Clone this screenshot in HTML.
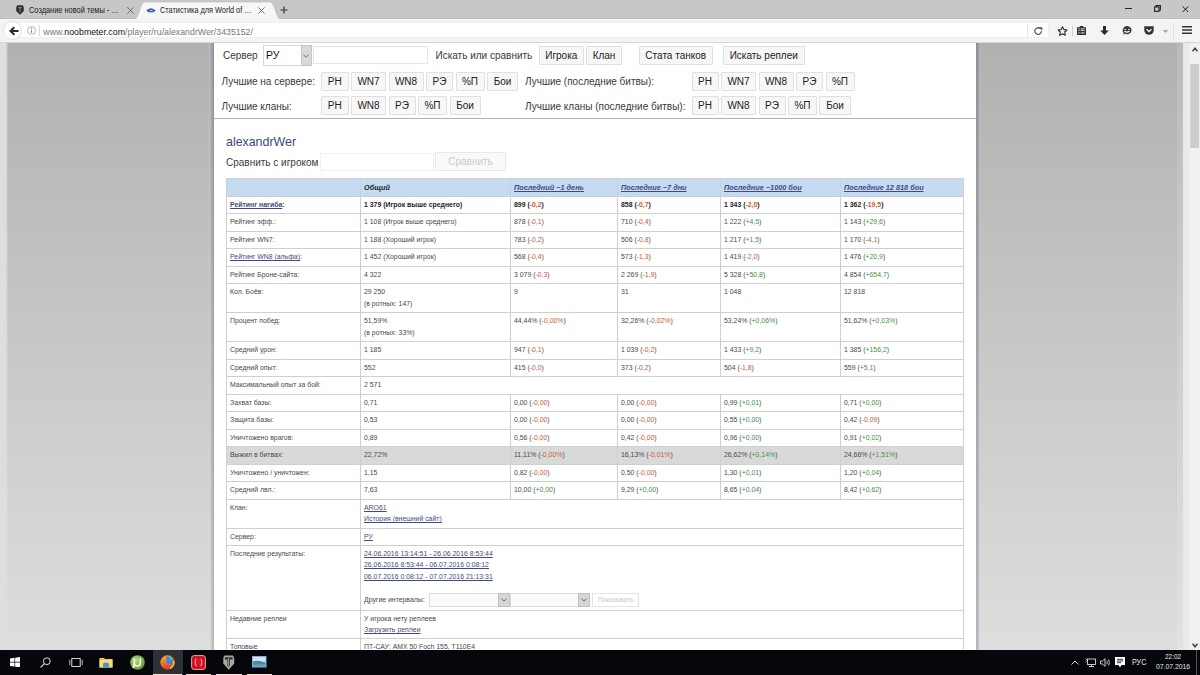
<!DOCTYPE html>
<html><head><meta charset="utf-8">
<style>
*{box-sizing:border-box}
html,body{margin:0;padding:0}
body{width:1200px;height:675px;overflow:hidden;position:relative;font-family:"Liberation Sans",sans-serif;background:#fff}
.abs{position:absolute}
.t{position:absolute;white-space:nowrap;font-size:6.9px;line-height:11.5px}
u,.t u{text-decoration-thickness:0.7px;text-underline-offset:0.8px}
.hl{position:absolute;left:226.0px;width:738.0px;height:1px;background:#cfcfcf}
.vl{position:absolute;width:1px;background:#cfcfcf}
.btn{position:absolute;height:19px;border:1px solid #e0e0e0;background:#f7f7f7;font-size:10px;line-height:17.6px;text-align:center;color:#222;border-radius:1px}
.lbl{position:absolute;font-size:10px;line-height:12px;color:#3a3a3a;white-space:nowrap}
</style></head><body>
<!-- tab strip -->
<div class="abs" style="left:0;top:0;width:1200px;height:19px;background:#c7c7c7"></div>
<div class="abs" style="left:0;top:18px;width:1200px;height:1px;background:#bdbdbd"></div>
<!-- active tab -->
<svg class="abs" style="left:130px;top:0" width="155" height="20" viewBox="0 0 155 20">
 <path d="M4 19.5 C9 19.5 10 2 15 2 L140 2 C145 2 146 19.5 151 19.5 Z" fill="#f6f6f7" stroke="#b8b8b8" stroke-width="0.6"/>
</svg>
<div class="abs" style="left:0;top:18.5px;width:1200px;height:24px;background:#f4f4f4"></div>
<!-- tab 1 -->
<svg class="abs" style="left:16px;top:4.8px" width="8" height="10" viewBox="0 0 8 10"><path d="M1.2 0.3 H6.8 L7.8 2.5 V6 L4 9.8 L0.2 6 V2.5 Z" fill="#2e2e2e"/><path d="M2.3 2.6 H5.7 M4 2.6 V7" stroke="#8a8a8a" stroke-width="1"/></svg>
<div class="abs" style="left:29px;top:6px;font-size:8.4px;line-height:9px;color:#1a1a1a;white-space:nowrap;transform:scaleX(0.885);transform-origin:0 0">Создание новой темы - …</div>
<svg class="abs" style="left:126.5px;top:6.5px" width="7" height="7" viewBox="0 0 7 7"><path d="M0.4 0.3 L6.6 6.7 M6.6 0.3 L0.4 6.7" stroke="#555" stroke-width="0.8"/></svg>
<!-- tab 2 -->
<svg class="abs" style="left:146.2px;top:7.6px" width="10" height="5" viewBox="0 0 10 5"><path d="M0.2 2.7 Q2 0.2 5 0.2 Q8 0.2 9.8 2.7 Q7.5 4.6 5 4.6 Q2.5 4.6 0.2 2.7 Z" fill="#3f5eae"/><ellipse cx="5.3" cy="2.6" rx="1.8" ry="0.7" fill="#a9c4f0"/></svg>
<div class="abs" style="left:160px;top:6px;font-size:8.4px;line-height:9px;color:#1a1a1a;white-space:nowrap;transform:scaleX(0.875);transform-origin:0 0">Статистика для World of …</div>
<svg class="abs" style="left:258px;top:7.2px" width="7" height="7" viewBox="0 0 7 7"><path d="M0.4 0.4 L6.6 6.6 M6.6 0.4 L0.4 6.6" stroke="#555" stroke-width="0.8"/></svg>
<svg class="abs" style="left:279.5px;top:5.8px" width="8" height="8" viewBox="0 0 8 8"><path d="M4 0.5 L4 7.5 M0.5 4 L7.5 4" stroke="#333" stroke-width="1.2"/></svg>
<!-- window controls -->
<div class="abs" style="left:1125px;top:8px;width:6.5px;height:1.1px;background:#222"></div>
<svg class="abs" style="left:1153.5px;top:5.2px" width="7" height="7" viewBox="0 0 7 7"><rect x="0.6" y="2" width="4.4" height="4.4" fill="none" stroke="#222" stroke-width="1.1"/><path d="M2 2 V0.6 H6.4 V5 H5" fill="none" stroke="#222" stroke-width="1.1"/></svg>
<svg class="abs" style="left:1182.3px;top:5.5px" width="7" height="6.5" viewBox="0 0 7 6.5"><path d="M0.4 0.3 L6.6 6.2 M6.6 0.3 L0.4 6.2" stroke="#222" stroke-width="1"/></svg>

<!-- nav bar -->
<div class="abs" style="left:10px;top:22.3px;width:1039px;height:15.8px;background:#fff;border:1px solid #f0f0f0;border-left:none;border-radius:0 2px 2px 0"></div>
<div class="abs" style="left:3px;top:21px;width:19px;height:19px;border-radius:50%;background:#fff;border:1px solid #e0e0e0"></div>
<svg class="abs" style="left:8.5px;top:25.5px" width="10" height="10" viewBox="0 0 10 10"><path d="M9.5 5 L2 5 M5.3 1.2 L1.5 5 L5.3 8.8" fill="none" stroke="#2a2a2a" stroke-width="2"/></svg>
<svg class="abs" style="left:26.5px;top:26px" width="9" height="9" viewBox="0 0 9 9"><circle cx="4.5" cy="4.5" r="4" fill="none" stroke="#a0a0a0" stroke-width="0.8"/><path d="M4.5 3.8 L4.5 7" stroke="#8a8a8a" stroke-width="1"/><circle cx="4.5" cy="2.4" r="0.6" fill="#8a8a8a"/></svg>
<div class="abs" style="left:39px;top:25px;width:1px;height:11px;background:#d8d8d8"></div>
<div class="abs" style="left:43.3px;top:26.8px;font-size:8.8px;line-height:11px;color:#777;white-space:nowrap">www.<span style="color:#111">noobmeter.com</span>/player/ru/alexandrWer/3435152/</div>
<div class="abs" style="left:1027px;top:23.5px;width:1px;height:13.5px;background:#e8e8e8"></div>
<svg class="abs" style="left:1033.5px;top:27px" width="9" height="8" viewBox="0 0 9 8"><path d="M7.4 4.2 A3.3 3.3 0 1 1 6.3 1.6" fill="none" stroke="#5a5a5a" stroke-width="1.3"/><path d="M4.6 0.2 L8.4 0.2 L8.2 3.8 Z" fill="#5a5a5a"/></svg>
<svg class="abs" style="left:1057px;top:26px" width="11" height="10" viewBox="0 0 11 10"><path d="M5.5 0.7 L6.9 3.6 L10 4 L7.7 6 L8.4 9.3 L5.5 7.7 L2.6 9.3 L3.3 6 L1 4 L4.1 3.6 Z" fill="none" stroke="#2b2b2b" stroke-width="1.1" stroke-linejoin="round"/></svg>
<div class="abs" style="left:1072px;top:26px;width:1px;height:10px;background:#d0d0d0"></div>
<svg class="abs" style="left:1077.3px;top:26px" width="9" height="9" viewBox="0 0 9 9"><path d="M0.7 1.8 H8.3 V8.3 H0.7 Z" fill="none" stroke="#2b2b2b" stroke-width="1.3"/><path d="M3 0 H6 L6.5 1.8 H2.5 Z" fill="#2b2b2b"/><path d="M1 3.9 H8 M1 5.5 H8 M1 7 H8 M3.2 2 V8" stroke="#2b2b2b" stroke-width="0.9"/></svg>
<svg class="abs" style="left:1100px;top:25.8px" width="9" height="9" viewBox="0 0 9 9"><path d="M3 0 H6 V4.5 H8.8 L4.5 9 L0.2 4.5 H3 Z" fill="#2b2b2b"/></svg>
<svg class="abs" style="left:1121.7px;top:26px" width="10" height="9" viewBox="0 0 10 9"><path d="M5 0.1 A4.4 4.1 0 1 1 2.7 7.6 L1.2 8.9 L1.6 6.7 A4.4 4.1 0 0 1 5 0.1 Z" fill="#3a3a3a"/><path d="M2.4 3.4 H4 M6 3.4 H7.6" stroke="#fff" stroke-width="0.9"/><path d="M2.5 5 Q5 7.3 7.5 5" fill="none" stroke="#fff" stroke-width="1.1"/></svg>
<svg class="abs" style="left:1144.2px;top:26px" width="10" height="9" viewBox="0 0 10 9"><path d="M0.3 0.3 H9.7 V4.3 A4.7 4.5 0 0 1 0.3 4.3 Z" fill="#333"/><path d="M2.6 3.3 L5 5.6 L7.4 3.3" fill="none" stroke="#fff" stroke-width="1.3"/></svg>
<svg class="abs" style="left:1163.2px;top:28.5px" width="5" height="4" viewBox="0 0 5 4"><path d="M0.6 0.8 L2.5 3 L4.4 0.8" fill="none" stroke="#999" stroke-width="1.3"/></svg>
<div class="abs" style="left:1173px;top:22px;width:1px;height:19px;background:#e2e2e2"></div>
<svg class="abs" style="left:1182px;top:26.3px" width="10" height="8" viewBox="0 0 10 8"><path d="M0 0.8 H10 M0 4 H10 M0 7.2 H10" stroke="#333" stroke-width="1.5"/></svg>
<div class="abs" style="left:0;top:41.5px;width:1200px;height:1px;background:#d6d6d6"></div>

<!-- page background -->
<div class="abs" style="left:0;top:42.5px;width:1183px;height:607.5px;background:linear-gradient(#b1b1b1,#dedede)"></div>
<div class="abs" style="left:0;top:42.5px;width:7.5px;height:607.5px;background:linear-gradient(to right,#dedede 75%,rgba(222,222,222,0))"></div>
<div class="abs" style="left:1177px;top:42.5px;width:6px;height:607.5px;background:linear-gradient(#bababa,#e2e2e2)"></div>
<div class="abs" style="left:208px;top:42.5px;width:6px;height:607.5px;background:linear-gradient(to right,rgba(235,235,245,0.05),rgba(240,240,250,0.08) 30%,rgba(30,30,50,0.12) 65%,rgba(30,30,50,0.24))"></div>
<div class="abs" style="left:976px;top:42.5px;width:5px;height:607.5px;background:linear-gradient(to right,rgba(30,20,60,0.22),rgba(30,20,60,0.18) 45%,rgba(230,230,240,0.06) 70%,rgba(0,0,0,0))"></div>
<div class="abs" style="left:214px;top:42.5px;width:762px;height:607.5px;background:#fff"></div>

<!-- scrollbar -->
<div class="abs" style="left:1183px;top:42.5px;width:6px;height:607.5px;background:#e9e9e9"></div><div class="abs" style="left:1189px;top:42.5px;width:11px;height:607.5px;background:#f0f0f0"></div>
<svg class="abs" style="left:1192px;top:46.5px" width="6" height="5" viewBox="0 0 6 5"><path d="M0.6 4.2 L3 1.2 L5.4 4.2" fill="none" stroke="#404040" stroke-width="1.5"/></svg>
<div class="abs" style="left:1190px;top:64px;width:9px;height:84px;background:#cdcdcd"></div>
<svg class="abs" style="left:1192px;top:642.5px" width="6" height="5" viewBox="0 0 6 5"><path d="M0.6 0.8 L3 3.8 L5.4 0.8" fill="none" stroke="#404040" stroke-width="1.5"/></svg>

<!-- header menu -->
<div class="lbl" style="left:223px;top:50px">Сервер</div>
<div class="abs" style="left:263px;top:45px;width:49px;height:20.5px;border:1px solid #d6d6d6;background:#fff"></div>
<div class="abs" style="left:266px;top:49px;font-size:10.5px;line-height:12px;color:#111">РУ</div>
<div class="abs" style="left:300.5px;top:45px;width:11.5px;height:20.5px;background:#d9d9d9;border:1px solid #c6c6c6"></div>
<svg class="abs" style="left:303px;top:54px" width="6" height="4" viewBox="0 0 6 4"><path d="M0.5 0.8 L3 3.2 L5.5 0.8" fill="none" stroke="#666" stroke-width="0.9"/></svg>
<div class="abs" style="left:313px;top:45.5px;width:115px;height:18.5px;border:1px solid #e6e6e6;background:#fff"></div>
<div class="lbl" style="left:435.5px;top:50px">Искать или сравнить</div>
<div class="btn" style="left:538.5px;top:45.5px;width:45.5px">Игрока</div>
<div class="btn" style="left:586px;top:45.5px;width:36px">Клан</div>
<div class="btn" style="left:639px;top:45.5px;width:73.5px">Стата танков</div>
<div class="btn" style="left:723px;top:45.5px;width:81.5px">Искать реплеи</div>

<div class="lbl" style="left:221.5px;top:75.5px">Лучшие на сервере:</div>
<div class="btn" style="left:321px;top:72px;width:27.5px">РН</div>
<div class="btn" style="left:351px;top:72px;width:35px">WN7</div>
<div class="btn" style="left:388.5px;top:72px;width:35px">WN8</div>
<div class="btn" style="left:426px;top:72px;width:27px">РЭ</div>
<div class="btn" style="left:455.5px;top:72px;width:29px">%П</div>
<div class="btn" style="left:487px;top:72px;width:31px">Бои</div>
<div class="lbl" style="left:525px;top:75.5px">Лучшие (последние битвы):</div>
<div class="btn" style="left:691.5px;top:72px;width:27px">РН</div>
<div class="btn" style="left:721px;top:72px;width:35px">WN7</div>
<div class="btn" style="left:758.5px;top:72px;width:35px">WN8</div>
<div class="btn" style="left:796px;top:72px;width:27px">РЭ</div>
<div class="btn" style="left:825.5px;top:72px;width:29px">%П</div>

<div class="lbl" style="left:221.5px;top:100.8px">Лучшие кланы:</div>
<div class="btn" style="left:321px;top:96px;width:27.5px">РН</div>
<div class="btn" style="left:351px;top:96px;width:35px">WN8</div>
<div class="btn" style="left:388.5px;top:96px;width:27px">РЭ</div>
<div class="btn" style="left:418px;top:96px;width:29px">%П</div>
<div class="btn" style="left:449.5px;top:96px;width:31px">Бои</div>
<div class="lbl" style="left:525px;top:100.8px">Лучшие кланы (последние битвы):</div>
<div class="btn" style="left:691.5px;top:96px;width:27px">РН</div>
<div class="btn" style="left:721px;top:96px;width:35px">WN8</div>
<div class="btn" style="left:758.5px;top:96px;width:27px">РЭ</div>
<div class="btn" style="left:788px;top:96px;width:29px">%П</div>
<div class="btn" style="left:819px;top:96px;width:32px">Бои</div>
<div class="abs" style="left:214px;top:117.5px;width:762px;height:1px;background:#b2b2b2"></div>

<div class="abs" style="left:226px;top:135.2px;font-size:12.4px;line-height:14px;color:#3b4a7c;white-space:nowrap">alexandrWer</div>
<div class="lbl" style="left:226px;top:157px">Сравнить с игроком</div>
<div class="abs" style="left:320px;top:153px;width:114px;height:18px;border:1px solid #f0f0f0;background:#fff"></div>
<div class="btn" style="left:435px;top:152px;width:71px;color:#cbcbcb;border-color:#e9e9e9;background:#f9f9f9">Сравнить</div>

<div style="position:absolute;left:226.5px;top:178.5px;width:737.0px;height:18.0px;background:#c5dbf1"></div>
<div style="position:absolute;left:226.5px;top:446.6px;width:737.0px;height:17.5px;background:#d9d9d9"></div>
<div class="hl" style="top:178.0px"></div>
<div class="hl" style="top:196.0px"></div>
<div class="hl" style="top:213.4px"></div>
<div class="hl" style="top:230.9px"></div>
<div class="hl" style="top:248.4px"></div>
<div class="hl" style="top:265.9px"></div>
<div class="hl" style="top:283.4px"></div>
<div class="hl" style="top:312.4px"></div>
<div class="hl" style="top:341.1px"></div>
<div class="hl" style="top:358.6px"></div>
<div class="hl" style="top:376.1px"></div>
<div class="hl" style="top:393.6px"></div>
<div class="hl" style="top:411.1px"></div>
<div class="hl" style="top:428.6px"></div>
<div class="hl" style="top:446.1px"></div>
<div class="hl" style="top:463.6px"></div>
<div class="hl" style="top:481.1px"></div>
<div class="hl" style="top:498.6px"></div>
<div class="hl" style="top:527.6px"></div>
<div class="hl" style="top:544.6px"></div>
<div class="hl" style="top:609.6px"></div>
<div class="hl" style="top:638.1px"></div>
<div class="vl" style="left:226.0px;top:178.0px;height:502.5px"></div>
<div class="vl" style="left:963.0px;top:178.0px;height:502.5px"></div>
<div class="vl" style="left:360.0px;top:178.0px;height:502.5px"></div>
<div class="vl" style="left:510.0px;top:178.0px;height:19.0px"></div>
<div class="vl" style="left:510.0px;top:196.0px;height:18.4px"></div>
<div class="vl" style="left:510.0px;top:213.4px;height:18.5px"></div>
<div class="vl" style="left:510.0px;top:230.9px;height:18.5px"></div>
<div class="vl" style="left:510.0px;top:248.4px;height:18.5px"></div>
<div class="vl" style="left:510.0px;top:265.9px;height:18.5px"></div>
<div class="vl" style="left:510.0px;top:283.4px;height:30.0px"></div>
<div class="vl" style="left:510.0px;top:312.4px;height:29.7px"></div>
<div class="vl" style="left:510.0px;top:341.1px;height:18.5px"></div>
<div class="vl" style="left:510.0px;top:358.6px;height:18.5px"></div>
<div class="vl" style="left:510.0px;top:393.6px;height:18.5px"></div>
<div class="vl" style="left:510.0px;top:411.1px;height:18.5px"></div>
<div class="vl" style="left:510.0px;top:428.6px;height:18.5px"></div>
<div class="vl" style="left:510.0px;top:446.1px;height:18.5px"></div>
<div class="vl" style="left:510.0px;top:463.6px;height:18.5px"></div>
<div class="vl" style="left:510.0px;top:481.1px;height:18.5px"></div>
<div class="vl" style="left:617.0px;top:178.0px;height:19.0px"></div>
<div class="vl" style="left:617.0px;top:196.0px;height:18.4px"></div>
<div class="vl" style="left:617.0px;top:213.4px;height:18.5px"></div>
<div class="vl" style="left:617.0px;top:230.9px;height:18.5px"></div>
<div class="vl" style="left:617.0px;top:248.4px;height:18.5px"></div>
<div class="vl" style="left:617.0px;top:265.9px;height:18.5px"></div>
<div class="vl" style="left:617.0px;top:283.4px;height:30.0px"></div>
<div class="vl" style="left:617.0px;top:312.4px;height:29.7px"></div>
<div class="vl" style="left:617.0px;top:341.1px;height:18.5px"></div>
<div class="vl" style="left:617.0px;top:358.6px;height:18.5px"></div>
<div class="vl" style="left:617.0px;top:393.6px;height:18.5px"></div>
<div class="vl" style="left:617.0px;top:411.1px;height:18.5px"></div>
<div class="vl" style="left:617.0px;top:428.6px;height:18.5px"></div>
<div class="vl" style="left:617.0px;top:446.1px;height:18.5px"></div>
<div class="vl" style="left:617.0px;top:463.6px;height:18.5px"></div>
<div class="vl" style="left:617.0px;top:481.1px;height:18.5px"></div>
<div class="vl" style="left:720.0px;top:178.0px;height:19.0px"></div>
<div class="vl" style="left:720.0px;top:196.0px;height:18.4px"></div>
<div class="vl" style="left:720.0px;top:213.4px;height:18.5px"></div>
<div class="vl" style="left:720.0px;top:230.9px;height:18.5px"></div>
<div class="vl" style="left:720.0px;top:248.4px;height:18.5px"></div>
<div class="vl" style="left:720.0px;top:265.9px;height:18.5px"></div>
<div class="vl" style="left:720.0px;top:283.4px;height:30.0px"></div>
<div class="vl" style="left:720.0px;top:312.4px;height:29.7px"></div>
<div class="vl" style="left:720.0px;top:341.1px;height:18.5px"></div>
<div class="vl" style="left:720.0px;top:358.6px;height:18.5px"></div>
<div class="vl" style="left:720.0px;top:393.6px;height:18.5px"></div>
<div class="vl" style="left:720.0px;top:411.1px;height:18.5px"></div>
<div class="vl" style="left:720.0px;top:428.6px;height:18.5px"></div>
<div class="vl" style="left:720.0px;top:446.1px;height:18.5px"></div>
<div class="vl" style="left:720.0px;top:463.6px;height:18.5px"></div>
<div class="vl" style="left:720.0px;top:481.1px;height:18.5px"></div>
<div class="vl" style="left:840.0px;top:178.0px;height:19.0px"></div>
<div class="vl" style="left:840.0px;top:196.0px;height:18.4px"></div>
<div class="vl" style="left:840.0px;top:213.4px;height:18.5px"></div>
<div class="vl" style="left:840.0px;top:230.9px;height:18.5px"></div>
<div class="vl" style="left:840.0px;top:248.4px;height:18.5px"></div>
<div class="vl" style="left:840.0px;top:265.9px;height:18.5px"></div>
<div class="vl" style="left:840.0px;top:283.4px;height:30.0px"></div>
<div class="vl" style="left:840.0px;top:312.4px;height:29.7px"></div>
<div class="vl" style="left:840.0px;top:341.1px;height:18.5px"></div>
<div class="vl" style="left:840.0px;top:358.6px;height:18.5px"></div>
<div class="vl" style="left:840.0px;top:393.6px;height:18.5px"></div>
<div class="vl" style="left:840.0px;top:411.1px;height:18.5px"></div>
<div class="vl" style="left:840.0px;top:428.6px;height:18.5px"></div>
<div class="vl" style="left:840.0px;top:446.1px;height:18.5px"></div>
<div class="vl" style="left:840.0px;top:463.6px;height:18.5px"></div>
<div class="vl" style="left:840.0px;top:481.1px;height:18.5px"></div>
<div class="t" style="left:364.00px;top:181.56px;font-weight:bold;font-style:italic;color:#222;font-size:7.3px">Общий</div>
<div class="t" style="left:514.00px;top:181.56px;font-weight:bold;font-style:italic;color:#3f4a80;text-decoration:underline;font-size:7.3px">Последний ~1 день</div>
<div class="t" style="left:621.00px;top:181.56px;font-weight:bold;font-style:italic;color:#3f4a80;text-decoration:underline;font-size:7.3px">Последние ~7 дни</div>
<div class="t" style="left:724.00px;top:181.56px;font-weight:bold;font-style:italic;color:#3f4a80;text-decoration:underline;font-size:7.3px">Последние ~1000 бои</div>
<div class="t" style="left:844.00px;top:181.56px;font-weight:bold;font-style:italic;color:#3f4a80;text-decoration:underline;font-size:7.3px">Последние 12 818 бои</div>
<div class="t" style="left:230.00px;top:198.96px;font-weight:bold;color:#333"><u style="color:#3f4a80">Рейтинг нагиба</u>:</div>
<div class="t" style="left:364.00px;top:198.96px;font-weight:bold;color:#222">1 379 (Игрок выше среднего)</div>
<div class="t" style="left:514.00px;top:198.96px;font-weight:bold;color:#222">899 (<span style="color:#c65a34">-0,2</span>)</div>
<div class="t" style="left:621.00px;top:198.96px;font-weight:bold;color:#222">858 (<span style="color:#c65a34">-0,7</span>)</div>
<div class="t" style="left:724.00px;top:198.96px;font-weight:bold;color:#222">1 343 (<span style="color:#c65a34">-2,0</span>)</div>
<div class="t" style="left:844.00px;top:198.96px;font-weight:bold;color:#222">1 362 (<span style="color:#c65a34">-19,5</span>)</div>
<div class="t" style="left:230.00px;top:216.36px;color:#484848">Рейтинг эфф.:</div>
<div class="t" style="left:364.00px;top:216.36px;color:#484848">1 108 (Игрок выше среднего)</div>
<div class="t" style="left:514.00px;top:216.36px;color:#484848">878 (<span style="color:#c65a34">-0,1</span>)</div>
<div class="t" style="left:621.00px;top:216.36px;color:#484848">710 (<span style="color:#c65a34">-0,4</span>)</div>
<div class="t" style="left:724.00px;top:216.36px;color:#484848">1 222 (<span style="color:#449244">+4,5</span>)</div>
<div class="t" style="left:844.00px;top:216.36px;color:#484848">1 143 (<span style="color:#449244">+29,6</span>)</div>
<div class="t" style="left:230.00px;top:233.86px;color:#484848">Рейтинг WN7:</div>
<div class="t" style="left:364.00px;top:233.86px;color:#484848">1 188 (Хороший игрок)</div>
<div class="t" style="left:514.00px;top:233.86px;color:#484848">783 (<span style="color:#c65a34">-0,2</span>)</div>
<div class="t" style="left:621.00px;top:233.86px;color:#484848">506 (<span style="color:#c65a34">-0,8</span>)</div>
<div class="t" style="left:724.00px;top:233.86px;color:#484848">1 217 (<span style="color:#449244">+1,5</span>)</div>
<div class="t" style="left:844.00px;top:233.86px;color:#484848">1 170 (<span style="color:#c65a34">-4,1</span>)</div>
<div class="t" style="left:230.00px;top:251.36px;color:#484848"><u style="color:#3f4a80">Рейтинг WN8 (альфа)</u>:</div>
<div class="t" style="left:364.00px;top:251.36px;color:#484848">1 452 (Хороший игрок)</div>
<div class="t" style="left:514.00px;top:251.36px;color:#484848">568 (<span style="color:#c65a34">-0,4</span>)</div>
<div class="t" style="left:621.00px;top:251.36px;color:#484848">573 (<span style="color:#c65a34">-1,3</span>)</div>
<div class="t" style="left:724.00px;top:251.36px;color:#484848">1 419 (<span style="color:#c65a34">-2,0</span>)</div>
<div class="t" style="left:844.00px;top:251.36px;color:#484848">1 476 (<span style="color:#449244">+20,9</span>)</div>
<div class="t" style="left:230.00px;top:268.86px;color:#484848">Рейтинг Броне-сайта:</div>
<div class="t" style="left:364.00px;top:268.86px;color:#484848">4 322</div>
<div class="t" style="left:514.00px;top:268.86px;color:#484848">3 079 (<span style="color:#c65a34">-0,3</span>)</div>
<div class="t" style="left:621.00px;top:268.86px;color:#484848">2 269 (<span style="color:#c65a34">-1,9</span>)</div>
<div class="t" style="left:724.00px;top:268.86px;color:#484848">5 328 (<span style="color:#449244">+50,8</span>)</div>
<div class="t" style="left:844.00px;top:268.86px;color:#484848">4 854 (<span style="color:#449244">+654,7</span>)</div>
<div class="t" style="left:230.00px;top:286.36px;color:#484848">Кол. Боёв:</div>
<div class="t" style="left:364.00px;top:286.36px;color:#484848">29 250</div>
<div class="t" style="left:364.00px;top:297.86px;color:#484848">(в ротных: 147)</div>
<div class="t" style="left:514.00px;top:286.36px;color:#484848">9</div>
<div class="t" style="left:621.00px;top:286.36px;color:#484848">31</div>
<div class="t" style="left:724.00px;top:286.36px;color:#484848">1 048</div>
<div class="t" style="left:844.00px;top:286.36px;color:#484848">12 818</div>
<div class="t" style="left:230.00px;top:315.36px;color:#484848">Процент побед:</div>
<div class="t" style="left:364.00px;top:315.36px;color:#484848">51,59%</div>
<div class="t" style="left:364.00px;top:326.86px;color:#484848">(в ротных: 33%)</div>
<div class="t" style="left:514.00px;top:315.36px;color:#484848">44,44% (<span style="color:#c65a34">-0,00%</span>)</div>
<div class="t" style="left:621.00px;top:315.36px;color:#484848">32,26% (<span style="color:#c65a34">-0,02%</span>)</div>
<div class="t" style="left:724.00px;top:315.36px;color:#484848">53,24% (<span style="color:#449244">+0,06%</span>)</div>
<div class="t" style="left:844.00px;top:315.36px;color:#484848">51,62% (<span style="color:#449244">+0,03%</span>)</div>
<div class="t" style="left:230.00px;top:344.06px;color:#484848">Средний урон:</div>
<div class="t" style="left:364.00px;top:344.06px;color:#484848">1 185</div>
<div class="t" style="left:514.00px;top:344.06px;color:#484848">947 (<span style="color:#c65a34">-0,1</span>)</div>
<div class="t" style="left:621.00px;top:344.06px;color:#484848">1 039 (<span style="color:#c65a34">-0,2</span>)</div>
<div class="t" style="left:724.00px;top:344.06px;color:#484848">1 433 (<span style="color:#449244">+9,2</span>)</div>
<div class="t" style="left:844.00px;top:344.06px;color:#484848">1 385 (<span style="color:#449244">+156,2</span>)</div>
<div class="t" style="left:230.00px;top:361.56px;color:#484848">Средний опыт:</div>
<div class="t" style="left:364.00px;top:361.56px;color:#484848">552</div>
<div class="t" style="left:514.00px;top:361.56px;color:#484848">415 (<span style="color:#c65a34">-0,0</span>)</div>
<div class="t" style="left:621.00px;top:361.56px;color:#484848">373 (<span style="color:#c65a34">-0,2</span>)</div>
<div class="t" style="left:724.00px;top:361.56px;color:#484848">504 (<span style="color:#c65a34">-1,8</span>)</div>
<div class="t" style="left:844.00px;top:361.56px;color:#484848">559 (<span style="color:#449244">+5,1</span>)</div>
<div class="t" style="left:230.00px;top:379.06px;color:#484848">Максимальный опыт за бой:</div>
<div class="t" style="left:364.00px;top:379.06px;color:#484848">2 571</div>
<div class="t" style="left:230.00px;top:396.56px;color:#484848">Захват базы:</div>
<div class="t" style="left:364.00px;top:396.56px;color:#484848">0,71</div>
<div class="t" style="left:514.00px;top:396.56px;color:#484848">0,00 (<span style="color:#c65a34">-0,00</span>)</div>
<div class="t" style="left:621.00px;top:396.56px;color:#484848">0,00 (<span style="color:#c65a34">-0,00</span>)</div>
<div class="t" style="left:724.00px;top:396.56px;color:#484848">0,99 (<span style="color:#449244">+0,01</span>)</div>
<div class="t" style="left:844.00px;top:396.56px;color:#484848">0,71 (<span style="color:#449244">+0,00</span>)</div>
<div class="t" style="left:230.00px;top:414.06px;color:#484848">Защита базы:</div>
<div class="t" style="left:364.00px;top:414.06px;color:#484848">0,53</div>
<div class="t" style="left:514.00px;top:414.06px;color:#484848">0,00 (<span style="color:#c65a34">-0,00</span>)</div>
<div class="t" style="left:621.00px;top:414.06px;color:#484848">0,00 (<span style="color:#c65a34">-0,00</span>)</div>
<div class="t" style="left:724.00px;top:414.06px;color:#484848">0,55 (<span style="color:#449244">+0,00</span>)</div>
<div class="t" style="left:844.00px;top:414.06px;color:#484848">0,42 (<span style="color:#c65a34">-0,09</span>)</div>
<div class="t" style="left:230.00px;top:431.56px;color:#484848">Уничтожено врагов:</div>
<div class="t" style="left:364.00px;top:431.56px;color:#484848">0,89</div>
<div class="t" style="left:514.00px;top:431.56px;color:#484848">0,56 (<span style="color:#c65a34">-0,00</span>)</div>
<div class="t" style="left:621.00px;top:431.56px;color:#484848">0,42 (<span style="color:#c65a34">-0,00</span>)</div>
<div class="t" style="left:724.00px;top:431.56px;color:#484848">0,96 (<span style="color:#449244">+0,00</span>)</div>
<div class="t" style="left:844.00px;top:431.56px;color:#484848">0,91 (<span style="color:#449244">+0,02</span>)</div>
<div class="t" style="left:230.00px;top:449.06px;color:#484848">Выжил в битвах:</div>
<div class="t" style="left:364.00px;top:449.06px;color:#484848">22,72%</div>
<div class="t" style="left:514.00px;top:449.06px;color:#484848">11,11% (<span style="color:#c65a34">-0,00%</span>)</div>
<div class="t" style="left:621.00px;top:449.06px;color:#484848">16,13% (<span style="color:#c65a34">-0,01%</span>)</div>
<div class="t" style="left:724.00px;top:449.06px;color:#484848">26,62% (<span style="color:#449244">+0,14%</span>)</div>
<div class="t" style="left:844.00px;top:449.06px;color:#484848">24,66% (<span style="color:#449244">+1,51%</span>)</div>
<div class="t" style="left:230.00px;top:466.56px;color:#484848">Уничтожено / уничтожен:</div>
<div class="t" style="left:364.00px;top:466.56px;color:#484848">1,15</div>
<div class="t" style="left:514.00px;top:466.56px;color:#484848">0,82 (<span style="color:#c65a34">-0,00</span>)</div>
<div class="t" style="left:621.00px;top:466.56px;color:#484848">0,50 (<span style="color:#c65a34">-0,00</span>)</div>
<div class="t" style="left:724.00px;top:466.56px;color:#484848">1,30 (<span style="color:#449244">+0,01</span>)</div>
<div class="t" style="left:844.00px;top:466.56px;color:#484848">1,20 (<span style="color:#449244">+0,04</span>)</div>
<div class="t" style="left:230.00px;top:484.06px;color:#484848">Средний лвл.:</div>
<div class="t" style="left:364.00px;top:484.06px;color:#484848">7,63</div>
<div class="t" style="left:514.00px;top:484.06px;color:#484848">10,00 (<span style="color:#449244">+0,00</span>)</div>
<div class="t" style="left:621.00px;top:484.06px;color:#484848">9,29 (<span style="color:#449244">+0,00</span>)</div>
<div class="t" style="left:724.00px;top:484.06px;color:#484848">8,65 (<span style="color:#449244">+0,04</span>)</div>
<div class="t" style="left:844.00px;top:484.06px;color:#484848">8,42 (<span style="color:#449244">+0,62</span>)</div>
<div class="t" style="left:230.00px;top:501.56px;color:#484848">Клан:</div>
<div class="t" style="left:364.00px;top:501.56px;color:#3f4a80"><u>ARO61</u></div>
<div class="t" style="left:364.00px;top:513.06px;color:#3f4a80"><u>История (внешний сайт)</u></div>
<div class="t" style="left:230.00px;top:530.56px;color:#484848">Сервер:</div>
<div class="t" style="left:364.00px;top:530.56px;color:#3f4a80"><u>РУ</u></div>
<div class="t" style="left:230.00px;top:547.56px;color:#484848">Последние результаты:</div>
<div class="t" style="left:364.00px;top:547.56px;color:#3f4a80"><u>24.06.2016 13:14:51 - 26.06.2016 8:53:44</u></div>
<div class="t" style="left:364.00px;top:559.06px;color:#3f4a80"><u>26.06.2016 8:53:44 - 06.07.2016 0:08:12</u></div>
<div class="t" style="left:364.00px;top:570.56px;color:#3f4a80"><u>06.07.2016 0:08:12 - 07.07.2016 21:13:31</u></div>
<div class="t" style="left:364.00px;top:593.96px;color:#484848">Другие интервалы:</div>
<div class="t" style="left:230.00px;top:612.56px;color:#484848">Недавние реплеи</div>
<div class="t" style="left:364.00px;top:612.56px;color:#484848">У игрока нету реплеев</div>
<div class="t" style="left:364.00px;top:624.06px;color:#3f4a80"><u>Загрузить реплеи</u></div>
<div class="t" style="left:230.00px;top:641.06px;color:#484848">Топовые</div>
<div class="t" style="left:364.00px;top:641.06px;color:#484848">ПТ-САУ: AMX 50 Foch 155, T110E4</div>

<!-- intervals selects -->
<div class="abs" style="left:429px;top:593px;width:81px;height:14px;border:1px solid #dcdcdc;background:#fafafa"></div>
<div class="abs" style="left:497.5px;top:593px;width:12px;height:14px;background:#d6d6d6;border:1px solid #c0c0c0"></div>
<svg class="abs" style="left:500.5px;top:598px" width="6" height="4" viewBox="0 0 6 4"><path d="M0.6 0.6 L3 3.2 L5.4 0.6" fill="none" stroke="#555" stroke-width="0.9"/></svg>
<div class="abs" style="left:510px;top:593px;width:80px;height:14px;border:1px solid #dcdcdc;background:#fafafa"></div>
<div class="abs" style="left:578px;top:593px;width:12px;height:14px;background:#d6d6d6;border:1px solid #c0c0c0"></div>
<svg class="abs" style="left:581px;top:598px" width="6" height="4" viewBox="0 0 6 4"><path d="M0.6 0.6 L3 3.2 L5.4 0.6" fill="none" stroke="#555" stroke-width="0.9"/></svg>
<div class="abs" style="left:592px;top:593px;width:47px;height:14px;border:1px solid #e3e3e3;background:#fff;font-size:6.5px;line-height:12px;color:#c8c8c8;text-align:center">Показывать</div>

<!-- taskbar -->
<div class="abs" style="left:0;top:650px;width:1200px;height:25px;background:#06070c"></div>

<svg class="abs" style="left:10px;top:657px" width="10.3" height="10.3" viewBox="0 0 11 11"><path d="M0 1.5 L4.8 0.8 V5.1 H0 Z M5.5 0.7 L11 0 V5.1 H5.5 Z M0 5.8 H4.8 V10.2 L0 9.5 Z M5.5 5.8 H11 V11 L5.5 10.3 Z" fill="#fff"/></svg>
<svg class="abs" style="left:39.5px;top:656.8px" width="11" height="11" viewBox="0 0 11 11"><circle cx="6.8" cy="4.2" r="3.4" fill="none" stroke="#e6e6e6" stroke-width="1"/><path d="M4.4 6.6 L0.6 10.4" stroke="#e6e6e6" stroke-width="1.1"/></svg>
<svg class="abs" style="left:68.5px;top:658.3px" width="14" height="9" viewBox="0 0 14 9"><rect x="2.8" y="0.5" width="8.4" height="8" fill="none" stroke="#e8e8e8" stroke-width="0.9"/><path d="M0.8 1.8 V7.2 M13.2 1.8 V7.2" stroke="#bbb" stroke-width="1"/></svg>
<svg class="abs" style="left:99px;top:656.5px" width="14" height="11" viewBox="0 0 14 11"><path d="M0.5 1 H5 L6 2 H13.5 V10.5 H0.5 Z" fill="#f3c85a"/><rect x="0.5" y="3" width="13" height="7.5" fill="#f8d877"/><path d="M4 10.5 L4 6.5 Q7 4.5 10 6.5 L10 10.5 Z" fill="#3a9ad9"/></svg>
<svg class="abs" style="left:129.5px;top:655px" width="15" height="15" viewBox="0 0 15 15"><defs><radialGradient id="ut" cx="0.4" cy="0.35" r="0.7"><stop offset="0" stop-color="#b5d98a"/><stop offset="1" stop-color="#5e9a2e"/></radialGradient></defs><circle cx="7.5" cy="7.5" r="7.3" fill="url(#ut)"/><path d="M4.3 3.5 V8.3 Q4.3 11 7.3 11 Q10.3 11 10.3 8.3 V3.5 M4.3 8 L3.3 13" fill="none" stroke="#f4f9ee" stroke-width="1.6"/></svg>
<div class="abs" style="left:152.5px;top:650px;width:30px;height:25px;background:#2f3033"></div>
<svg class="abs" style="left:159.8px;top:655px" width="15" height="15" viewBox="0 0 15 15"><defs><linearGradient id="ff" x1="0" y1="0" x2="0.3" y2="1"><stop offset="0" stop-color="#f7b731"/><stop offset="0.5" stop-color="#ef7a2a"/><stop offset="1" stop-color="#d9423a"/></linearGradient></defs><circle cx="7.5" cy="7.5" r="7.2" fill="url(#ff)"/><path d="M6.5 1.2 Q11.5 0.8 12.8 5.5 Q12.5 9.5 8.8 9.3 Q6.2 8.8 6.5 6 Z" fill="#3b86d8"/><path d="M8.5 1.5 Q11 2.5 11.5 5" fill="none" stroke="#5ec0ef" stroke-width="1.2"/><path d="M13.8 6 Q14.5 11 10 13.5" fill="none" stroke="#f6d04a" stroke-width="1.3"/></svg>
<svg class="abs" style="left:190.8px;top:655.2px" width="15" height="15" viewBox="0 0 15 15"><rect x="0.6" y="0.6" width="13.8" height="13.8" rx="2.5" fill="#c8101c" stroke="#f1a0a6" stroke-width="1"/><circle cx="7.5" cy="7.5" r="4.6" fill="#d9141f"/><path d="M5 3.6 Q3 7.5 5.2 11.3 M10 3.6 Q12 7.5 9.8 11.3" fill="none" stroke="#f7b9bd" stroke-width="0.9"/></svg>
<svg class="abs" style="left:223px;top:655px" width="11.5" height="15" viewBox="0 0 11.5 15"><path d="M1.5 0.5 H10 L11.2 3 V8.5 L5.75 14.7 L0.3 8.5 V3 Z" fill="#a9a9a2"/><path d="M2.2 2.2 H9.3 L9.8 4.5 H7 V10.5 L5.75 12 L4.5 10.5 V4.5 H1.7 Z" fill="#2a2a2a"/><path d="M5.75 3 V11" stroke="#c8c8c0" stroke-width="0.8"/></svg>
<svg class="abs" style="left:252px;top:656px" width="14.5" height="11.5" viewBox="0 0 14.5 11.5"><rect x="0.5" y="0.5" width="13.5" height="10.5" fill="#cfe6f7" stroke="#7fb2e0" stroke-width="1"/><path d="M1 5.5 Q6 3.5 13.5 6.5 V10.5 H1 Z" fill="#4d8a8f"/><path d="M1 8.5 H13.5 V10.5 H1 Z" fill="#6d9ec9"/></svg>
<div class="abs" style="left:152.7px;top:673.5px;width:29.5px;height:1.5px;background:#f0e4d0"></div>
<div class="abs" style="left:186px;top:673.5px;width:24.5px;height:1.5px;background:#f0e4d0"></div>
<div class="abs" style="left:216px;top:673.5px;width:25.5px;height:1.5px;background:#f0e4d0"></div>
<div class="abs" style="left:246.5px;top:673.5px;width:25.5px;height:1.5px;background:#f0e4d0"></div>
<svg class="abs" style="left:1071px;top:660px" width="8" height="5" viewBox="0 0 8 5"><path d="M0.5 4.5 L4 1 L7.5 4.5" fill="none" stroke="#ddd" stroke-width="1"/></svg>
<svg class="abs" style="left:1085px;top:658px" width="11" height="9" viewBox="0 0 11 9"><rect x="2.5" y="1" width="8" height="5.5" fill="none" stroke="#ddd" stroke-width="0.9"/><path d="M6.5 6.5 V8.5 M4 8.5 H9" stroke="#ddd" stroke-width="0.9"/><path d="M0.5 0.5 L2.5 2.5 L0.5 4" fill="none" stroke="#ddd" stroke-width="0.8"/></svg>
<svg class="abs" style="left:1099.5px;top:658px" width="11" height="9" viewBox="0 0 11 9"><path d="M0.5 3 H2.5 L5 0.7 V8.3 L2.5 6 H0.5 Z" fill="none" stroke="#ddd" stroke-width="0.9"/><path d="M6.8 2.8 Q7.8 4.5 6.8 6.2 M8.5 1.5 Q10.2 4.5 8.5 7.5" fill="none" stroke="#ddd" stroke-width="0.9"/></svg>
<svg class="abs" style="left:1114.5px;top:657px" width="10" height="11" viewBox="0 0 10 11"><path d="M0 0 H10 V8 H6.5 L5 10.5 L3.5 8 H0 Z" fill="#fff"/><path d="M2 2.3 H8 M2 4 H8 M2 5.7 H6" stroke="#06070c" stroke-width="0.8"/></svg>
<div class="abs" style="left:1131.5px;top:657px;font-size:8.3px;line-height:10px;color:#e8e8e8;white-space:nowrap;transform:scaleX(0.86);transform-origin:0 0">РУС</div>
<div class="abs" style="left:1165px;top:652.5px;font-size:8px;line-height:8px;color:#e8e8e8;white-space:nowrap;transform:scaleX(0.81);transform-origin:0 0">22:02</div>
<div class="abs" style="left:1156px;top:662.5px;font-size:8px;line-height:8px;color:#e8e8e8;white-space:nowrap;transform:scaleX(0.85);transform-origin:0 0">07.07.2016</div>
<div class="abs" style="left:1196px;top:650px;width:1px;height:25px;background:#555"></div>

</body></html>
